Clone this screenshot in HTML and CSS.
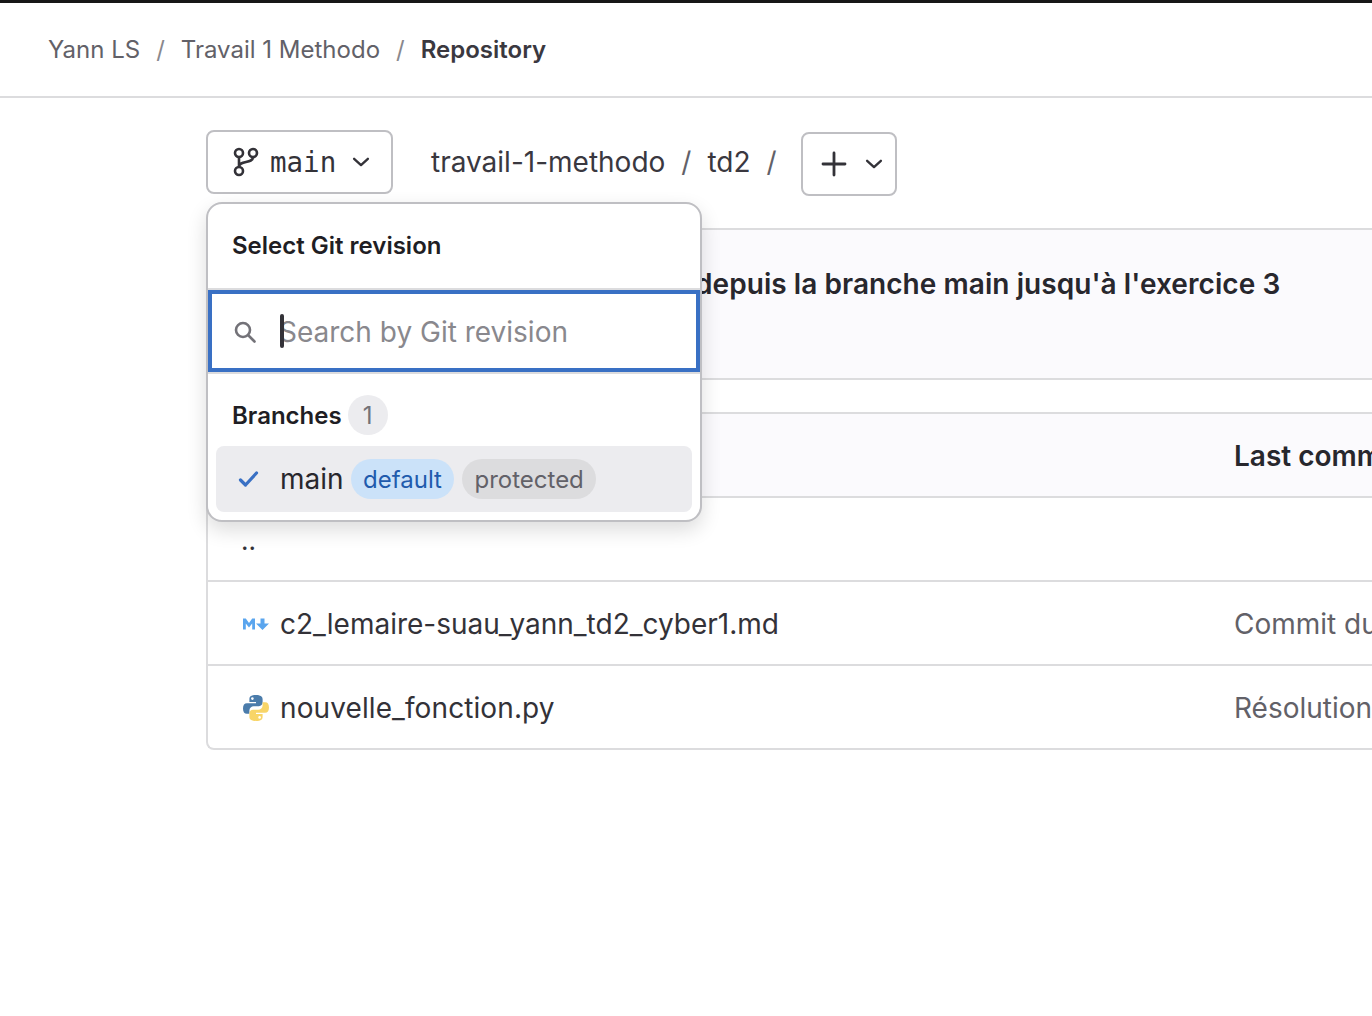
FILE: index.html
```html
<!DOCTYPE html>
<html lang="en">
<head>
    <meta charset="UTF-8">
    <meta name="viewport" content="width=device-width, initial-scale=1.0">
    <title>Repository</title>
    <link rel="stylesheet" href="styles.css">
</head>
<body>
    <div class="top-bar"></div>
    <nav class="breadcrumbs">
        <a>Yann LS</a>
        <span class="sep">/</span>
        <a>Travail 1 Methodo</a>
        <span class="sep">/</span>
        <b>Repository</b>
    </nav>

    <main class="content">
        <div class="toolbar">
            <button class="btn branch-btn" type="button">
                <svg class="icon-branch" width="28" height="30" viewBox="0 0 28 30" fill="none" stroke="currentColor" stroke-width="2.6"><circle cx="6" cy="6" r="4"/><circle cx="6" cy="24" r="4"/><circle cx="20" cy="6" r="4"/><path d="M6 10v10M20 10c0 7-14 3-14 10"/></svg>
                <span class="branch-name">main</span>
                <svg class="chevron" width="20" height="20" viewBox="0 0 16 16" fill="none" stroke="currentColor" stroke-width="1.900" stroke-linecap="round" stroke-linejoin="round"><path d="M2.500 5.500 8 10.500l5.500-5"/></svg>
            </button>
            <div class="path">
                <span>travail-1-methodo</span>
                <span class="sep">/</span>
                <span>td2</span>
                <span class="sep">/</span>
            </div>
            <button class="btn add-btn" type="button">
                <svg width="26" height="26" viewBox="0 0 26 26" fill="none" stroke="currentColor" stroke-width="2.800" stroke-linecap="round"><path d="M13 2v22M2 13h22"/></svg>
                <svg class="chevron" width="20" height="20" viewBox="0 0 16 16" fill="none" stroke="currentColor" stroke-width="1.900" stroke-linecap="round" stroke-linejoin="round"><path d="M2.500 5.500 8 10.500l5.500-5"/></svg>
            </button>
        </div>

        <div class="commit-box">
            <p>depuis la branche main jusqu'à l'exercice 3</p>
        </div>

        <div class="file-table">
            <div class="row head">
                <div class="col-name"></div>
                <div class="col-commit">Last commit</div>
            </div>
            <div class="row">
                <div class="col-name dots">..</div>
            </div>
            <div class="row">
                <div class="col-name">
                    <svg class="file-icon" width="28" height="14" viewBox="0 0 28 14" fill="#5aa5ee"><path d="M1 12.500V1.500h2.800L7 6l3.200-4.500H13v11h-2.800V6.500L7 10.500 3.800 6.500v6z"/><path d="M18.500 1.500h4v5H27L20.500 13 14 6.500h4.500z"/></svg>
                    <span>c2_lemaire-suau_yann_td2_cyber1.md</span>
                </div>
                <div class="col-commit muted">Commit du TD2 sur la branche</div>
            </div>
            <div class="row">
                <div class="col-name">
                    <svg class="file-icon" width="28" height="28" viewBox="0 0 28 28"><path fill="#4b7cab" d="M14 1c-5 0-6.600 1.600-6.600 4v3H14v1.200H5C2.400 9.200 1 11 1 14.500s1.400 5.300 3.800 5.300h2.600v-3.300c0-2.500 2-4.300 4.400-4.300h5.200c2 0 3.600-1.600 3.600-3.600V5c0-2.400-2.200-4-6.600-4z"/><path fill="#f8d568" d="M14 27c5 0 6.600-1.600 6.600-4v-3H14v-1.200h9c2.600 0 4-1.800 4-5.300s-1.400-5.300-3.800-5.300h-2.600v3.300c0 2.500-2 4.300-4.400 4.300h-5.200c-2 0-3.600 1.600-3.600 3.600V23c0 2.400 2.200 4 6.600 4z"/><circle cx="10.400" cy="4.600" r="1.300" fill="#fff"/><circle cx="17.600" cy="23.400" r="1.300" fill="#fff"/></svg>
                    <span class="file-py">nouvelle_fonction.py</span>
                </div>
                <div class="col-commit muted">Résolution de l'exercice 3</div>
            </div>
        </div>

        <!-- branch dropdown, open over the page -->
        <div class="dropdown">
            <h3 class="dropdown-title">Select Git revision</h3>
            <div class="search">
                <svg width="24" height="24" viewBox="0 0 24 24" fill="none" stroke="currentColor" stroke-width="2.600" stroke-linecap="round"><circle cx="10" cy="10" r="7"/><path d="m15.500 15.500 6 6"/></svg>
                <span class="caret"></span>
                <input class="search-input" type="text" placeholder="Search by Git revision">
            </div>
            <div class="group-title">Branches <span class="count">1</span></div>
            <div class="option">
                <svg class="check" width="24" height="24" viewBox="0 0 24 24" fill="none" stroke="currentColor" stroke-width="3.200" stroke-linecap="round" stroke-linejoin="round"><path d="m4.500 13 5 5L20.500 6"/></svg>
                <span class="option-name">main</span>
                <span class="badge blue">default</span>
                <span class="badge gray">protected</span>
            </div>
        </div>
    </main>
</body>
</html>
```

FILE: styles.css
```css
* {
    box-sizing: border-box;
}

html, body {
    margin: 0;
    height: 1016px;
    overflow: hidden;
}

body {
    font-family: Inter, "Noto Sans", sans-serif;
    font-size: 28px;
    color: #333238;
    background-color: #fff;
}

.top-bar {
    height: 3px;
    background-color: #171717;
}

.breadcrumbs {
    display: flex;
    align-items: center;
    height: 95px;
    padding-left: 48px;
    gap: 16px;
    border-bottom: 2px solid #dcdcde;
    font-size: 24px;
    color: #626168;
}

.breadcrumbs b {
    color: #3a383f;
    font-weight: 600;
}

.breadcrumbs .sep {
    color: #89888d;
}

.content {
    position: relative;
    padding-left: 206px;
    padding-top: 32px;
    width: 1500px;
}

.toolbar {
    display: flex;
    align-items: flex-start;
    height: 98px;
}

.btn {
    display: flex;
    align-items: center;
    height: 64px;
    background: #fff;
    border: 2px solid #bfbfc3;
    border-radius: 8px;
    color: #333238;
    padding: 0;
}

.branch-btn {
    width: 187px;
    padding-left: 25px;
}

.branch-name {
    font-family: "DejaVu Sans Mono", monospace;
    font-size: 27.500px;
    margin-left: 9px;
    margin-right: 15px;
}

.path {
    display: flex;
    align-items: center;
    height: 64px;
    margin-left: 38px;
    gap: 16px;
    color: #3a383f;
}

.path .sep {
    color: #626168;
}

.add-btn {
    width: 96px;
    margin-left: 24px;
    margin-top: 2px;
    padding-left: 18px;
    gap: 17px;
}

.commit-box {
    height: 152px;
    background-color: #fbfafd;
    border: 2px solid #dcdcde;
    border-right: 0;
    border-radius: 8px 0 0 0;
    padding: 37px 0 0 487px;
}

.commit-box p {
    margin: 0;
    font-weight: 600;
    letter-spacing: 0.060px;
    color: #28272d;
}

.file-table {
    margin-top: 32px;
    border: 2px solid #dcdcde;
    border-right: 0;
    border-radius: 8px 0 0 8px;
}

.row {
    display: flex;
    align-items: center;
    height: 84px;
    padding-top: 2px;
    border-top: 2px solid #dcdcde;
}

.row.head {
    height: 82px;
    border-top: 0;
    background-color: #fbfafd;
    font-weight: 600;
    color: #28272d;
}

.col-name {
    display: flex;
    align-items: center;
    width: 1026px;
    padding-left: 34px;
    gap: 10px;
    flex-shrink: 0;
}

.col-commit {
    white-space: nowrap;
}

.muted {
    color: #626168;
}

.dots {
    font-size: 26px;
    margin-left: -1px;
}

.file-py {
    letter-spacing: 0.100px;
}

.file-icon {
    flex-shrink: 0;
}

.dropdown {
    position: absolute;
    left: 206px;
    top: 104px;
    width: 496px;
    height: 320px;
    background: #fff;
    border: 2px solid #bfbfc3;
    border-radius: 16px;
    box-shadow: 0 8px 20px rgba(5, 5, 6, 0.14);
}

.dropdown-title {
    margin: 0;
    height: 86px;
    padding: 27px 0 0 24px;
    font-size: 24px;
    font-weight: 600;
    color: #1f1e24;
    border-bottom: 2px solid #dcdcde;
}

.search {
    position: relative;
    display: flex;
    align-items: center;
    height: 82px;
    border: 4px solid #3970c4;
    padding: 2px 0 0 21px;
    color: #737278;
}

.search-input {
    flex: 1;
    min-width: 0;
    margin-left: 22px;
    border: 0;
    outline: 0;
    padding: 0;
    font-family: inherit;
    font-size: 28px;
    color: #333238;
    background: transparent;
}

.search-input::placeholder {
    color: #89888d;
    opacity: 1;
}

.caret {
    position: absolute;
    left: 68px;
    top: 20px;
    width: 4px;
    height: 34px;
    border-radius: 2px;
    background-color: #333238;
}

.group-title {
    display: flex;
    align-items: center;
    gap: 6px;
    height: 74px;
    padding: 10px 0 0 24px;
    font-size: 24px;
    font-weight: 600;
    color: #1f1e24;
    border-top: 2px solid #dcdcde;
}

.count {
    display: flex;
    align-items: center;
    justify-content: center;
    width: 40px;
    height: 40px;
    border-radius: 50%;
    background-color: #ececef;
    color: #737278;
    font-weight: 400;
}

.option {
    display: flex;
    align-items: center;
    height: 66px;
    margin: 0 8px;
    padding-left: 20px;
    background-color: #ececef;
    border-radius: 8px;
    color: #28272d;
}

.check {
    color: #3970c4;
}

.option-name {
    margin-left: 20px;
    margin-right: 7px;
}

.badge {
    display: inline-flex;
    align-items: center;
    height: 40px;
    padding: 0 12px;
    border-radius: 20px;
    font-size: 24px;
    margin-right: 8px;
}

.badge.blue {
    padding: 0 12.500px;
    background-color: #cbe2f9;
    color: #1f5bad;
}

.badge.gray {
    background-color: #dcdcde;
    color: #626168;
}
```
